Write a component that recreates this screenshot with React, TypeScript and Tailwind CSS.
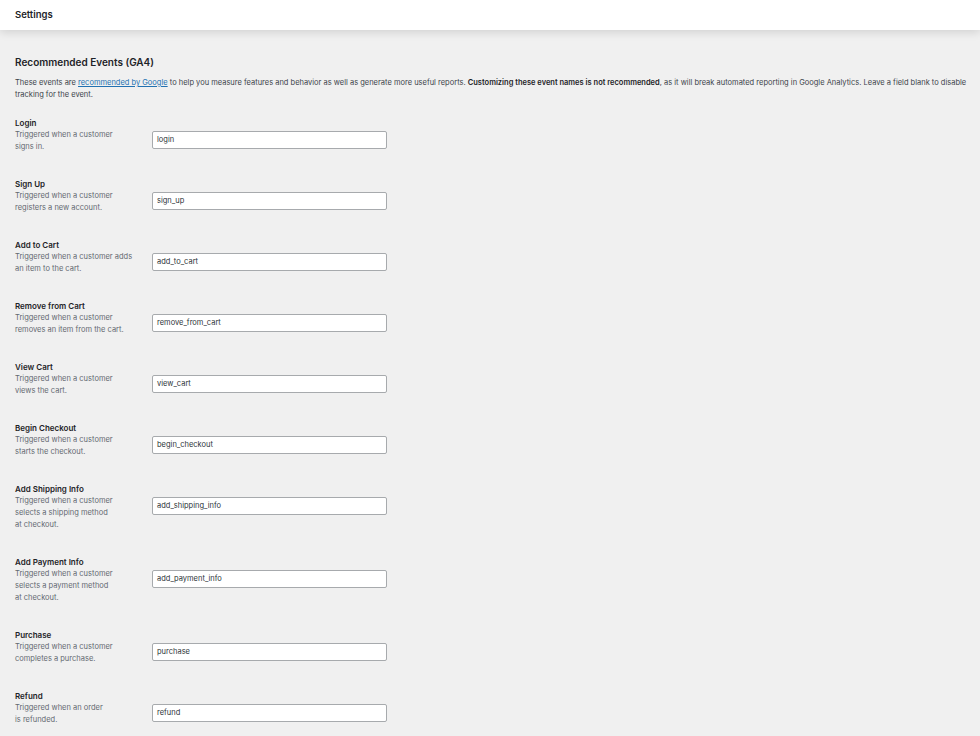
import React from "react";

const rows: { title: string; desc: string[]; value: string }[] = [
  { title: "Login", desc: ["Triggered when a customer", "signs in."], value: "login" },
  { title: "Sign Up", desc: ["Triggered when a customer", "registers a new account."], value: "sign_up" },
  { title: "Add to Cart", desc: ["Triggered when a customer adds", "an item to the cart."], value: "add_to_cart" },
  { title: "Remove from Cart", desc: ["Triggered when a customer", "removes an item from the cart."], value: "remove_from_cart" },
  { title: "View Cart", desc: ["Triggered when a customer", "views the cart."], value: "view_cart" },
  { title: "Begin Checkout", desc: ["Triggered when a customer", "starts the checkout."], value: "begin_checkout" },
  { title: "Add Shipping Info", desc: ["Triggered when a customer", "selects a shipping method", "at checkout."], value: "add_shipping_info" },
  { title: "Add Payment Info", desc: ["Triggered when a customer", "selects a payment method", "at checkout."], value: "add_payment_info" },
  { title: "Purchase", desc: ["Triggered when a customer", "completes a purchase."], value: "purchase" },
  { title: "Refund", desc: ["Triggered when an order", "is refunded."], value: "refund" },
];

export default function App() {
  return (
    <div
      className="min-h-[736px] bg-[#f0f0f0] text-[#1d2327]"
      style={{ fontFamily: "Inter, 'Noto Sans', sans-serif" }}
    >
      <div className="relative h-[30px] bg-white shadow-[0_2px_9px_rgba(0,0,0,0.14)] flex items-center px-[15px]">
        <span className="text-[9.5px] font-semibold">Settings</span>
      </div>
      <div className="px-[15px] pt-[26px]">
        <h2 className="text-[10px] font-semibold leading-[13px] mb-[8px]">Recommended Events (GA4)</h2>
        <p className="text-[7.5px] leading-[12px] text-[#3c434a] mb-[17px]">
          <span className="whitespace-nowrap">
            These events are{" "}
            <a className="text-[#2271b1] underline">recommended by Google</a> to help you measure features and
            behavior as well as generate more useful reports. <b className="font-semibold text-[#1d2327]">Customizing these event names is not recommended</b>, as it will break automated reporting in Google Analytics. Leave a field blank to disable
          </span>
          <br />
          tracking for the event.
        </p>
        <div className="flex flex-col">
          {rows.map((r) => (
            <div key={r.value} className="flex items-start pb-[26px]">
              <div className="w-[137px]">
                <div className="text-[8px] font-semibold leading-[11px]">{r.title}</div>
                {r.desc.map((d) => (
                  <div key={d} className="text-[7.5px] leading-[12px] text-[#646970]">
                    {d}
                  </div>
                ))}
              </div>
              <div className="mt-[13px] w-[235px] h-[18px] bg-white border border-[#a7aaad] rounded-[2px] flex items-center px-[4px] text-[7.5px] text-[#2c3338]">
                {r.value}
              </div>
            </div>
          ))}
        </div>
      </div>
    </div>
  );
}
